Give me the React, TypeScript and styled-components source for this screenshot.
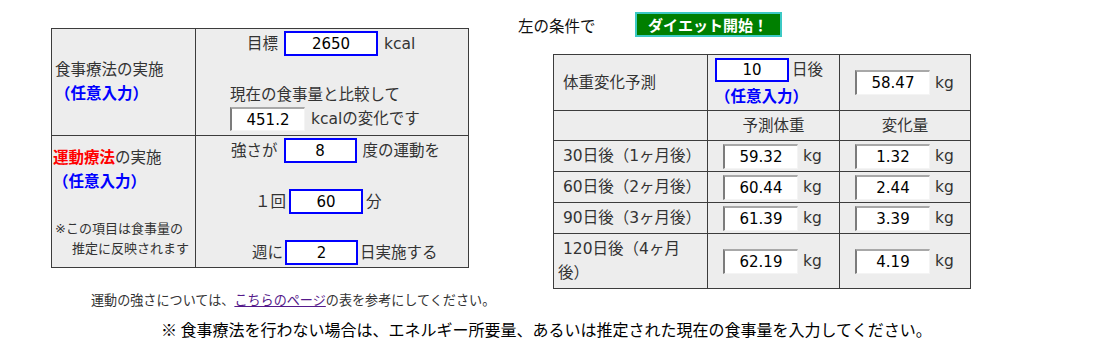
import React from 'react';
import styled, { createGlobalStyle } from 'styled-components';

const GlobalStyle = createGlobalStyle`
  body {
    margin: 0;
    background: #fff;
    font-family: "DejaVu Sans", "Noto Sans CJK JP", sans-serif;
    color: #333;
  }
`;

const Page = styled.div`
  width: 1099px;
  height: 363px;
  overflow: hidden;
`;

const Top = styled.div`
  display: flex;
  align-items: flex-start;
`;

const LeftCol = styled.div`
  margin-left: 51px;
  padding-top: 28px;
`;

const RightCol = styled.div`
  margin-left: 49px;
  padding-top: 12px;
`;

const Header = styled.div`
  display: flex;
  align-items: center;
  height: 25px;
  font-size: 15.5px;
  color: #111;
`;

const StartButton = styled.button`
  margin-left: 39px;
  width: 147px;
  height: 25px;
  padding: 0;
  background: #007f00;
  border: 2px solid #3cc9c4;
  color: #fff;
  font-family: "Noto Sans CJK JP", sans-serif;
  font-size: 15px;
  font-weight: bold;
  line-height: 19px;
`;

const Table = styled.div<{ $cols: string; $rows: string; $top?: number; $left?: number }>`
  display: grid;
  grid-template-columns: ${p => p.$cols};
  grid-template-rows: ${p => p.$rows};
  gap: 1px;
  padding: 1px;
  width: max-content;
  margin-top: ${p => p.$top || 0}px;
  margin-left: ${p => p.$left || 0}px;
  background: #3c3c3c;
`;

const Cell = styled.div<{ $justify?: string; $align?: string; $pad?: string; $indent?: number; $gap?: number }>`
  display: flex;
  flex-direction: column;
  justify-content: ${p => p.$justify || 'flex-start'};
  align-items: ${p => p.$align || 'stretch'};
  gap: ${p => p.$gap || 0}px;
  padding: ${p => p.$pad || '0'};
  background: #ededed;
  font-size: 15.5px;
  line-height: 24px;
  text-indent: ${p => p.$indent || 0}px;
`;

const Line = styled.div<{ $indent?: number; $gap?: number; $h?: number }>`
  display: flex;
  align-items: center;
  gap: ${p => p.$gap ?? 6}px;
  height: ${p => p.$h || 25}px;
  padding-left: ${p => p.$indent || 0}px;
  white-space: nowrap;
`;

const Block = styled.div<{ $top?: number; $indent?: number }>`
  margin-top: ${p => p.$top || 0}px;
  padding-left: ${p => p.$indent || 0}px;
`;

const Optional = styled.div<{ $top?: number }>`
  margin-top: ${p => p.$top || 0}px;
  color: #0000ff;
  font-weight: bold;
`;

const Red = styled.span`
  color: #ff0000;
  font-weight: bold;
`;

const SmallNote = styled.div`
  margin-top: 25px;
  padding-left: 2px;
  font-size: 13px;
  line-height: 20px;
  span {
    display: block;
    padding-left: 17px;
  }
`;

const BaseInput = styled.input<{ $w?: number; $h?: number }>`
  box-sizing: border-box;
  width: ${p => p.$w || 75}px;
  height: ${p => p.$h || 25}px;
  padding: 0;
  margin: 0;
  background: #fff;
  color: #000;
  font-family: "DejaVu Sans", sans-serif;
  font-size: 15px;
  text-align: center;
  outline: none;
`;

const BlueInput = styled(BaseInput)`
  border: 2px solid #0000ff;
`;

const GrayInput = styled(BaseInput)`
  border-style: solid;
  border-width: 2px 1px 1px 2px;
  border-color: #a8a8a8 #f4f4f4 #f4f4f4 #7c7c7c;
`;

const Note = styled.div`
  margin-top: 1px;
  padding-left: 91px;
  font-family: "Noto Sans CJK JP", sans-serif;
  font-size: 13.1px;
  line-height: 20px;
  color: #333;
  a {
    color: #551a8b;
    text-decoration: underline;
  }
`;

const Footer = styled.div`
  margin-top: 8px;
  padding-left: 161px;
  font-family: "Noto Sans CJK JP", sans-serif;
  font-size: 16px;
  line-height: 22px;
  color: #000;
`;

const rows = [
  { label: '30日後（1ヶ月後）', weight: '59.32', diff: '1.32' },
  { label: '60日後（2ヶ月後）', weight: '60.44', diff: '2.44' },
  { label: '90日後（3ヶ月後）', weight: '61.39', diff: '3.39' },
  { label: '120日後（4ヶ月後）', weight: '62.19', diff: '4.19' },
];

const App = () => {
  return (
    <Page>
      <GlobalStyle />
      <Top>
        <LeftCol>
          <Table $cols="143px 272px" $rows="106px 131px">
            <Cell $justify="center" $pad="0 0 0 3px">
              <div>食事療法の実施</div>
              <Optional>（任意入力）</Optional>
            </Cell>
            <Cell $pad="2px 0 0 0">
              <Line $indent={51}>
                目標
                <BlueInput $w={94} readOnly value="2650" />
                kcal
              </Line>
              <Block $top={27} $indent={34}>
                <div>現在の食事量と比較して</div>
                <Line $h={24}>
                  <GrayInput $h={24} readOnly value="451.2" />
                  kcalの変化です
                </Line>
              </Block>
            </Cell>
            <Cell $pad="10px 0 0 1px">
              <div><Red>運動療法</Red>の実施</div>
              <Optional>（任意入力）</Optional>
              <SmallNote>
                ※この項目は食事量の
                <span>推定に反映されます</span>
              </SmallNote>
            </Cell>
            <Cell $pad="2px 0 0 0" $gap={26}>
              <Line $indent={35}>
                強さが
                <BlueInput $w={73} readOnly value="8" />
                度の運動を
              </Line>
              <Line $indent={59} $gap={3}>
                １回
                <BlueInput $w={74} readOnly value="60" />
                分
              </Line>
              <Line $indent={56} $gap={2}>
                週に
                <BlueInput $w={73} readOnly value="2" />
                日実施する
              </Line>
            </Cell>
          </Table>
        </LeftCol>

        <RightCol>
          <Header>
            左の条件で
            <StartButton>ダイエット開始！</StartButton>
          </Header>
          <Table
            $cols="153px 131px 130px"
            $rows="55px 29px 30px 30px 30px 54px"
            $top={17}
            $left={35}
          >
            <Cell $justify="center" $pad="0 0 0 9px">体重変化予測</Cell>
            <Cell $pad="3px 0 0 7px">
              <Line $gap={3} $h={24}>
                <BlueInput $w={74} $h={24} readOnly value="10" />
                日後
              </Line>
              <Optional $top={3}>（任意入力）</Optional>
            </Cell>
            <Cell $justify="center" $pad="0 0 0 15px">
              <Line $gap={5}>
                <GrayInput readOnly value="58.47" />
                kg
              </Line>
            </Cell>

            <Cell />
            <Cell $justify="center" $align="center">予測体重</Cell>
            <Cell $justify="center" $align="center">変化量</Cell>

            {rows.map(r => (
              <React.Fragment key={r.label}>
                <Cell $justify="center" $pad="0 8px 0 4px" $indent={5}>{r.label}</Cell>
                <Cell $justify="center" $pad="0 0 0 15px">
                  <Line $gap={5}>
                    <GrayInput readOnly value={r.weight} />
                    kg
                  </Line>
                </Cell>
                <Cell $justify="center" $pad="0 0 0 15px">
                  <Line $gap={5}>
                    <GrayInput readOnly value={r.diff} />
                    kg
                  </Line>
                </Cell>
              </React.Fragment>
            ))}
          </Table>
        </RightCol>
      </Top>

      <Note>
        運動の強さについては、<a href="#">こちらのページ</a>の表を参考にしてください。
      </Note>
      <Footer>
        ※ 食事療法を行わない場合は、エネルギー所要量、あるいは推定された現在の食事量を入力してください。
      </Footer>
    </Page>
  );
};

export default App;
